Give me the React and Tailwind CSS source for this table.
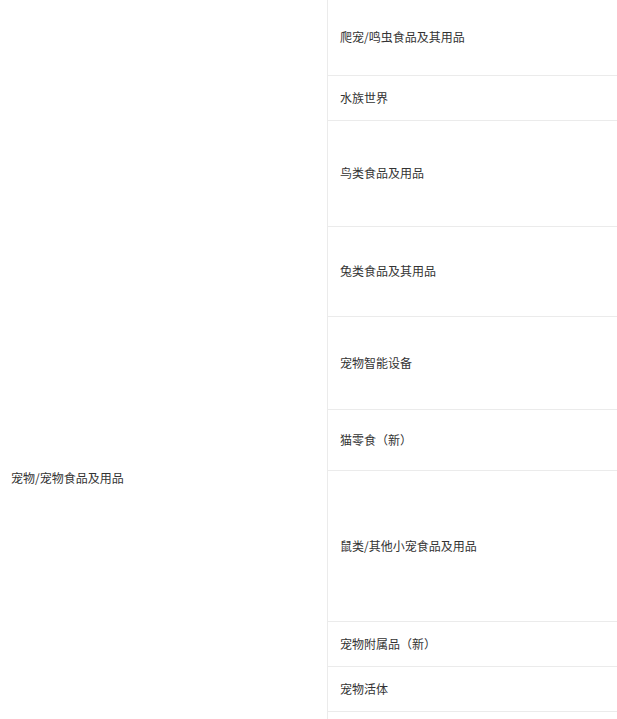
import React from 'react';

const rows = [
  { name: '爬宠/鸣虫食品及其用品', h: 'h-[76px]' },
  { name: '水族世界', h: 'h-[45px]' },
  { name: '鸟类食品及用品', h: 'h-[106px]' },
  { name: '兔类食品及其用品', h: 'h-[90px]' },
  { name: '宠物智能设备', h: 'h-[93px]' },
  { name: '猫零食（新）', h: 'h-[61px]' },
  { name: '鼠类/其他小宠食品及用品', h: 'h-[151px]' },
  { name: '宠物附属品（新）', h: 'h-[45px]' },
  { name: '宠物活体', h: 'h-[45px]' },
  // next row starts right at the bottom edge, its label sits below the fold
  { name: '', h: 'h-[243px]' },
];

export default function App() {
  return (
    <div
      className="h-[719px] w-full overflow-hidden bg-white text-[12px] text-[#333333]"
      style={{ fontFamily: '"Noto Sans CJK SC", "Liberation Sans", sans-serif' }}
    >
      <div className="flex w-full">
        <div className="flex w-[328px] shrink-0 items-center border-r border-[#ebebeb] pl-[11px]">
          宠物/宠物食品及用品
        </div>
        <div className="flex flex-1 flex-col">
          {rows.map((row, i) => (
            <div
              key={i}
              className={`${row.h} flex items-center border-b border-[#ebebeb] pl-[12px] pb-px`}
            >
              {row.name}
            </div>
          ))}
        </div>
      </div>
    </div>
  );
}
